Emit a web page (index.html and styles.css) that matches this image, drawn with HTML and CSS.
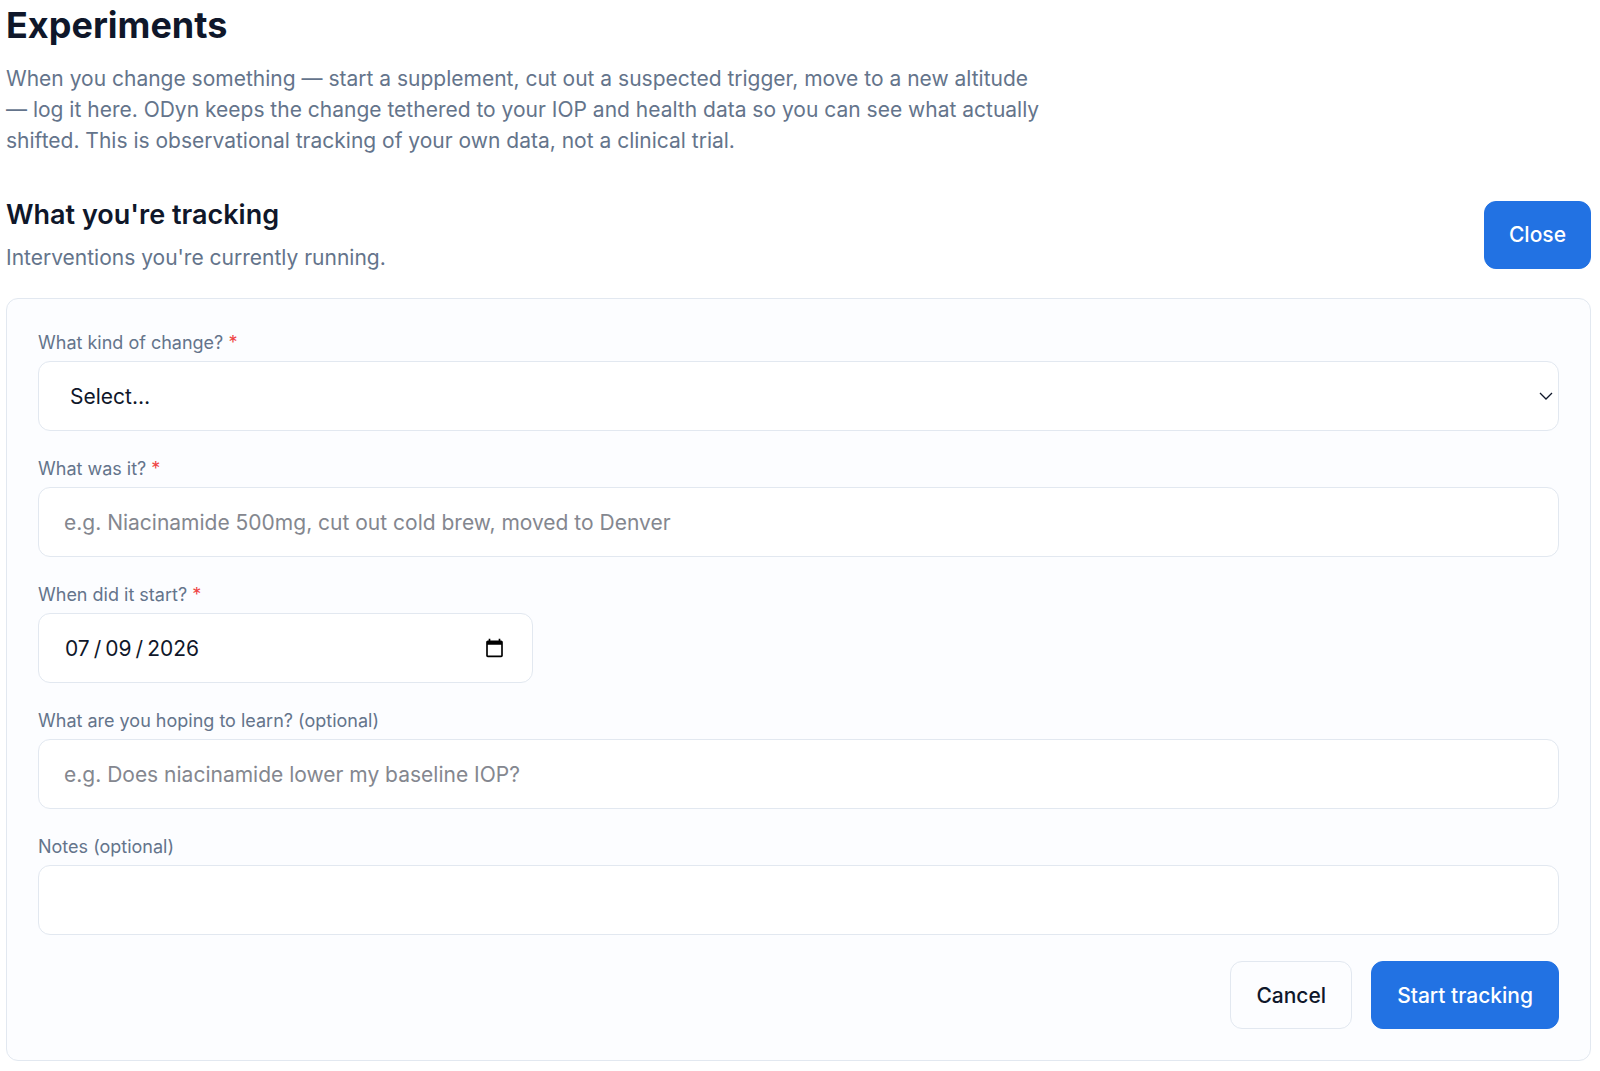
FILE: index.html
```
<!DOCTYPE html>
<html lang="en">
<head>
<meta charset="utf-8">
<meta name="viewport" content="width=device-width, initial-scale=1">
<title>Experiments</title>
<link rel="stylesheet" href="styles.css">
</head>
<body>
<main class="page">
  <header class="intro">
    <h1 class="title">Experiments</h1>
    <p class="lead">When you change something — start a supplement, cut out a suspected trigger, move to a new altitude — log it here. ODyn keeps the change tethered to your IOP and health data so you can see what actually shifted. This is observational tracking of your own data, not a clinical trial.</p>
  </header>
  <section class="tracking">
    <div class="section-head">
      <div class="section-text">
        <h2 class="subtitle">What you're tracking</h2>
        <p class="note">Interventions you're currently running.</p>
      </div>
      <button class="button primary" type="button">Close</button>
    </div>
    <form class="card">
      <div class="field">
        <label class="label" for="kind">What kind of change? <span class="required">*</span></label>
        <div class="select-wrap">
          <select class="control select" id="kind"><option>Select…</option></select>
          <svg class="chevron" viewBox="0 0 14 8" aria-hidden="true"><path d="M1 1l6 6 6-6"/></svg>
        </div>
      </div>
      <div class="field">
        <label class="label" for="what">What was it? <span class="required">*</span></label>
        <input class="control" id="what" type="text" placeholder="e.g. Niacinamide 500mg, cut out cold brew, moved to Denver">
      </div>
      <div class="field">
        <label class="label" for="start">When did it start? <span class="required">*</span></label>
        <input class="control date" id="start" type="date" value="2026-07-09">
      </div>
      <div class="field">
        <label class="label" for="learn">What are you hoping to learn? (optional)</label>
        <input class="control" id="learn" type="text" placeholder="e.g. Does niacinamide lower my baseline IOP?">
      </div>
      <div class="field">
        <label class="label" for="notes">Notes (optional)</label>
        <input class="control" id="notes" type="text">
      </div>
      <div class="actions">
        <button class="button outline" type="button">Cancel</button>
        <button class="button primary" type="submit">Start tracking</button>
      </div>
    </form>
  </section>
</main>
</body>
</html>
```
FILE: styles.css
```
* { box-sizing: border-box; }
body {
  margin: 0;
  background: #fff;
  color: #0f172a;
  font-family: Inter, "Liberation Sans", sans-serif;
  font-size: 21px;
  line-height: 31px;
}
h1, h2, p { margin: 0; }
.page { padding: 5px 9px 8px 6px; }
.title { font-size: 36px; line-height: 40px; font-weight: 700; }
.lead { margin-top: 18px; max-width: 1040px; color: #64748b; }
.tracking { margin-top: 40px; }
.section-head {
  display: flex;
  align-items: center;
  justify-content: space-between;
  gap: 24px;
  margin-bottom: 25px;
}
.subtitle { font-size: 27px; line-height: 37px; font-weight: 600; }
.note { margin-top: 9px; color: #64748b; }
.card {
  display: flex;
  flex-direction: column;
  gap: 25px;
  padding: 31px;
  border: 1px solid #e2e8f0;
  border-radius: 12px;
  background: #fcfdff;
}
.field { display: flex; flex-direction: column; gap: 6px; }
.label { font-size: 18px; line-height: 25px; color: #64748b; }
.required { color: #ef4444; }
.control {
  width: 100%;
  height: 70px;
  padding: 0 25px;
  border: 1px solid #e2e8f0;
  border-radius: 12px;
  background: #fff;
  color: #0f172a;
  font: inherit;
}
.control::placeholder { color: #84878f; }
.select-wrap { display: grid; align-items: center; }
.select-wrap > * { grid-area: 1 / 1; }
.select { appearance: none; padding: 0 31px; }
.chevron {
  justify-self: end;
  width: 14px;
  height: 8px;
  margin-right: 6px;
  fill: none;
  stroke: #0f172a;
  stroke-width: 1.3;
  pointer-events: none;
}
.date { max-width: 495px; }
.date::-webkit-datetime-edit-text { padding: 0 3px; }
.actions { display: flex; justify-content: flex-end; gap: 19px; margin-top: 1px; }
.actions .button { padding: 0 25px; }
.button {
  height: 68px;
  padding: 0 24px;
  border: 1px solid transparent;
  border-radius: 12px;
  font: inherit;
  font-weight: 500;
}
.primary { background: #2272e3; border-color: #2272e3; color: #fff; }
.outline { background: #fcfdff; border-color: #e2e8f0; color: #0f172a; }
```
